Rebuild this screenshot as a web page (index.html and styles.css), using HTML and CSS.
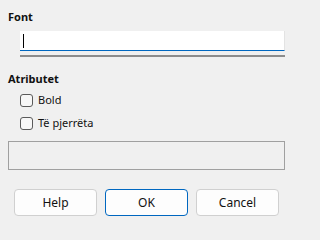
FILE: index.html
```html
<!DOCTYPE html>
<html>
<head>
<meta charset="utf-8">
<link rel="stylesheet" href="styles.css">
</head>
<body>
<div class="dialog">
  <div class="label">Font</div>
  <div class="field"><span class="caret"></span></div>
  <div class="bar"></div>
  <div class="label label-attr">Atributet</div>
  <div class="checks">
    <label class="check"><span class="box"></span><span>Bold</span></label>
    <label class="check"><span class="box"></span><span>Të pjerrëta</span></label>
  </div>
  <div class="preview"></div>
  <div class="buttons">
    <div class="btn">Help</div>
    <div class="btn btn-default">OK</div>
    <div class="btn">Cancel</div>
  </div>
</div>
</body>
</html>
```
FILE: styles.css
```css
html, body {
  margin: 0;
  padding: 0;
  background: #f0f0f0;
}
.dialog {
  width: 293px;
  height: 231px;
  box-sizing: border-box;
  padding: 9px 8px 0 8px;
  font-family: "Noto Sans", "Open Sans", sans-serif;
  font-size: 11px;
  color: #111;
}
.label {
  font-weight: bold;
  line-height: 16px;
  height: 16px;
}
.field {
  margin: 6px 0 0 12px;
  width: 265px;
  height: 20px;
  background: #ffffff;
  border-right: 1px solid #e3e3e3;
  border-bottom: 1px solid #0067c0;
  box-sizing: border-box;
  display: flex;
  align-items: center;
  padding-left: 3px;
}
.caret {
  width: 1px;
  height: 14px;
  background: #000;
}
.bar {
  margin: 4px 0 0 12px;
  width: 265px;
  height: 2px;
  background: #8c8c8c;
}
.label-attr {
  margin-top: 14px;
}
.checks {
  display: flex;
  flex-direction: column;
  gap: 7px;
  margin: 5px 0 0 12px;
}
.check {
  display: flex;
  align-items: center;
  gap: 5px;
  height: 16px;
  line-height: 16px;
}
.box {
  width: 11px;
  height: 11px;
  border: 1px solid #5a5a5a;
  border-radius: 3px;
  background: #f7f7f7;
}
.preview {
  margin-top: 10px;
  width: 277px;
  height: 29px;
  box-sizing: border-box;
  border: 1px solid #a0a0a0;
}
.buttons {
  display: flex;
  gap: 8px;
  margin: 19px 0 0 6px;
}
.btn {
  width: 83px;
  height: 27px;
  box-sizing: border-box;
  border: 1px solid #d0d0d0;
  border-radius: 4px;
  background: #fdfdfd;
  display: flex;
  align-items: center;
  justify-content: center;
  font-size: 12px;
  color: #111;
}
.btn-default {
  border-color: #0067c0;
}
```
